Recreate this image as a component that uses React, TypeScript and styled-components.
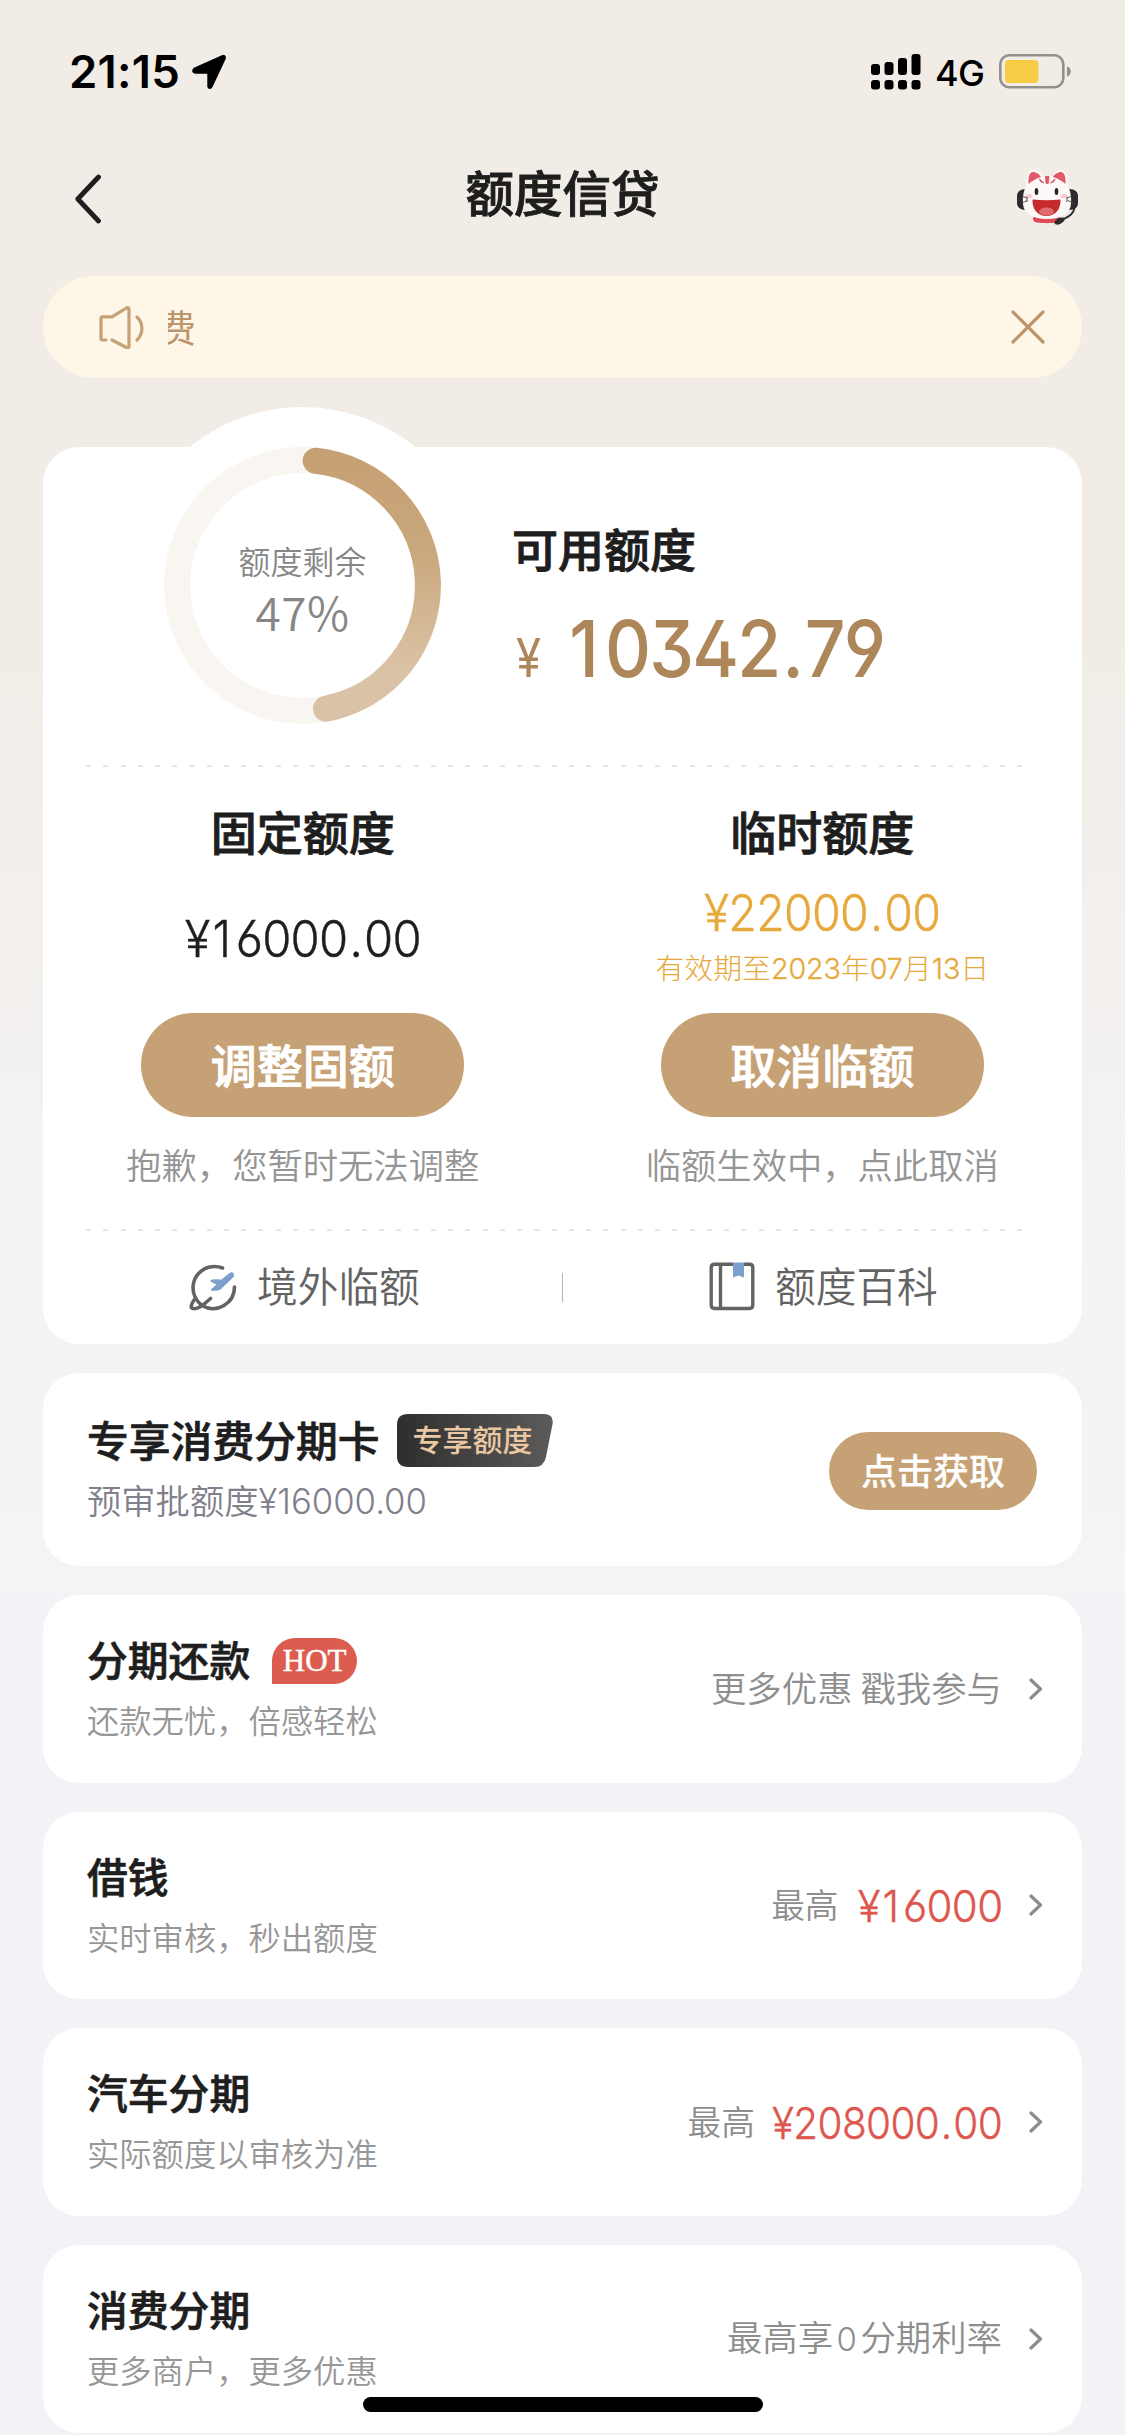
import React from "react";
import styled, { createGlobalStyle } from "styled-components";

const CJK = `"Noto Sans CJK SC", sans-serif`;
const LATIN = `Inter, "Noto Sans CJK SC", sans-serif`;
const GOLD = "#c6a175";
const INK = "#1e1e1e";

const GlobalStyle = createGlobalStyle`
  * { box-sizing: border-box; }
  html, body { margin: 0; padding: 0; }
  body { background: #f2f3f6; font-family: ${CJK}; color: ${INK}; }
  button { border: 0; padding: 0; background: none; font: inherit; color: inherit; }
  svg { display: block; flex: none; }
`;

const Page = styled.div`
  width: 1125px;
  height: 2435px;
  overflow: hidden;
  background: linear-gradient(180deg, #f1ece6 0, #f1ece6 640px, #f4f3f3 1180px, #f4f4f4 1595px, #f2f3f6 1595px);
`;

const StatusBar = styled.div`
  height: 132px;
  display: flex;
  align-items: flex-start;
  justify-content: space-between;
  padding: 54px 53px 0 69px;
  color: #000;
`;

const StatusGroup = styled.div`
  display: flex;
  align-items: center;
  height: 35px;
`;

const Clock = styled.span`
  font: 600 45.5px/35px ${LATIN};
  width: 122px;
  letter-spacing: 0.2px;
`;

const Network = styled.span`
  font: 500 36px/35px ${LATIN};
  width: 50px;
  margin: 3px 14px 0 14px;
  letter-spacing: -0.6px;
`;

const NavBar = styled.header`
  height: 144px;
  display: grid;
  grid-template-columns: 186px 1fr 214px;
  padding: 32px 47px 0 75px;
  align-items: start;
`;

const NavTitle = styled.h1`
  margin: 0;
  text-align: center;
  font-size: 48.5px;
  line-height: 54px;
  font-weight: 500;
  -webkit-text-stroke: 0.9px currentColor;
`;

const IconButton = styled.button<{ $end?: boolean }>`
  display: flex;
  justify-content: ${(p) => (p.$end ? "flex-end" : "flex-start")};
  padding-top: ${(p) => (p.$end ? 6 : 10)}px;
`;

const Notice = styled.div`
  height: 102px;
  margin: 0 43px;
  padding: 0 37px 0 55px;
  border-radius: 51px;
  background: #fef7e8;
  display: flex;
  align-items: center;
`;

const NoticeText = styled.div`
  flex: 1;
  margin: -3px 0 0 24px;
  overflow: hidden;
  color: #be956a;
  font-size: 38px;
  line-height: 56px;
  text-indent: -10px;
  white-space: nowrap;
`;

const Content = styled.main`
  padding: 69px 43px 0;
  display: flex;
  flex-direction: column;
  gap: 28.8px;
`;

const HeroCard = styled.section`
  position: relative;
  height: 897px;
  flex: none;
  border-radius: 36px;
  background: #fff;
  &::before {
    content: "";
    position: absolute;
    left: 81px;
    top: -40px;
    width: 357px;
    height: 357px;
    border-radius: 50%;
    background: #fff;
  }
`;

const Summary = styled.div`
  position: relative;
  display: flex;
  height: 318px;
  padding-left: 121px;
`;

const Gauge = styled.div`
  width: 277px;
  height: 277px;
  display: grid;
  place-items: center;
  & > * { grid-area: 1 / 1; }
`;

const GaugeText = styled.div`
  display: flex;
  flex-direction: column;
  align-items: center;
  color: #868686;
  padding-top: 6px;
`;

const GaugeLabel = styled.span`
  font-size: 32px;
  line-height: 44px;
  font-weight: 350;
`;

const GaugeValue = styled.span`
  font-size: 46px;
  line-height: 58px;
  font-weight: 350;
  letter-spacing: 0.4px;
`;

const Balance = styled.div`
  padding: 71px 0 0 71px;
`;

const BlockTitle = styled.h2`
  margin: 0;
  font-size: 46px;
  line-height: 58px;
  font-weight: 500;
  -webkit-text-stroke: 0.9px currentColor;
`;

const BalanceAmount = styled.div`
  display: flex;
  align-items: baseline;
  margin-top: 29px;
  height: 88px;
  color: #ad8659;
  font-family: ${LATIN};
  font-weight: 500;
  line-height: 88px;
`;

const BalanceYen = styled.span`
  font-size: 53px;
  font-weight: 400;
  width: 49px;
  margin-left: 4px;
  transform: scaleX(0.86);
  transform-origin: 0 50%;
`;

const BalanceDigits = styled.span`
  font-size: 78.4px;
  letter-spacing: -2px;
  font-feature-settings: "cv03", "cv04", "ss01";
  transform: scaleX(0.91);
  transform-origin: 0 50%;
`;

const One = styled.span`
  padding: 0 0.11em 0 0.06em;
`;

const Point = styled.span`
  padding: 0 0.04em;
`;

const Dashes = styled.div`
  height: 2px;
  margin: 0 55px 0 43px;
  background: repeating-linear-gradient(90deg, #e6e6e6 0 5px, transparent 5px 17.25px);
`;

const Limits = styled.div`
  height: 462px;
  display: grid;
  grid-template-columns: 1fr 1fr;
`;

const LimitColumn = styled.div`
  display: flex;
  flex-direction: column;
  align-items: center;
  padding-top: 34px;
`;

const LimitValue = styled.div`
  height: 154px;
  padding-top: 5px;
  display: flex;
  flex-direction: column;
  align-items: center;
  justify-content: center;
`;

const Money = styled.span<{ $size: number; $color: string; $origin?: string; $squeeze?: number }>`
  display: inline-block;
  font-family: ${LATIN};
  font-weight: 300;
  font-size: ${(p) => p.$size}px;
  line-height: 52px;
  color: ${(p) => p.$color};
  font-feature-settings: "cv03", "cv04", "ss01";
  letter-spacing: -0.015em;
  transform: scaleX(${(p) => p.$squeeze ?? 0.945});
  transform-origin: ${(p) => p.$origin ?? "50%"} 50%;
  -webkit-text-stroke: 0.4px currentColor;
`;

const Expiry = styled.span`
  margin-top: 6px;
  font: 300 28.9px/42px "Noto Sans CJK SC", sans-serif;
  color: #e6a93c;
  b {
    font: 300 28.7px/42px ${LATIN};
    letter-spacing: -0.1px;
    -webkit-text-stroke: 0.3px currentColor;
  }
`;

const PillButton = styled.button<{ $small?: boolean }>`
  width: ${(p) => (p.$small ? 208 : 323)}px;
  height: ${(p) => (p.$small ? 78 : 104)}px;
  margin-right: ${(p) => (p.$small ? 6 : 0)}px;
  margin-top: ${(p) => (p.$small ? 4 : 0)}px;
  border-radius: 52px;
  background: ${GOLD};
  color: #fff;
  font-size: ${(p) => (p.$small ? 36 : 46)}px;
  line-height: ${(p) => (p.$small ? 72 : 98)}px;
  padding-bottom: 5px;
  font-weight: 500;
  -webkit-text-stroke: ${(p) => (p.$small ? 0.2 : 0.9)}px currentColor;
`;

const Hint = styled.span`
  margin-top: 21px;
  font-size: 35.3px;
  line-height: 52px;
  font-weight: 350;
  color: #959595;
`;

const HeroLinks = styled.div`
  height: 113px;
  display: grid;
  grid-template-columns: 1fr 1px 1fr;
  align-items: center;
`;

const LinkDivider = styled.i`
  width: 1px;
  height: 29px;
  background: #b4b4b4;
`;

const HeroLink = styled.a`
  display: flex;
  align-items: center;
  padding-left: 146px;
  gap: 20px;
  color: #636363;
  font-size: 40.7px;
  line-height: 56px;
  font-weight: 350;
  svg { margin-top: -2px; }
  span { margin-top: -5px; }
`;

const OfferCard = styled.section<{ $height: number }>`
  height: ${(p) => p.$height}px;
  flex: none;
  border-radius: 36px;
  background: #fff;
  padding: 0 39px 0 44px;
  display: flex;
  justify-content: space-between;
`;

const OfferInfo = styled.div<{ $top: number }>`
  padding-top: ${(p) => p.$top}px;
`;

const OfferHead = styled.div`
  display: flex;
  align-items: center;
  height: 56px;
`;

const OfferTitle = styled.h3<{ $size?: number }>`
  margin: 0;
  font-size: ${(p) => p.$size ?? 40.8}px;
  line-height: 56px;
  font-weight: 500;
  -webkit-text-stroke: 0.7px currentColor;
`;

const OfferSub = styled.p<{ $size?: number; $color?: string }>`
  margin: 8px 0 0;
  font-size: ${(p) => p.$size ?? 32.3}px;
  line-height: 48px;
  font-weight: 350;
  color: ${(p) => p.$color ?? "#979797"};
  b { font: 300 34.7px/48px ${LATIN}; }
`;

const ExclusiveTag = styled.span`
  margin: 3px 0 0 17px;
  width: 156px;
  height: 53px;
  display: grid;
  & > * { grid-area: 1 / 1; }
  span {
    z-index: 1;
    padding-left: 16px;
    font-size: 30px;
    line-height: 48px;
    font-weight: 500;
    color: #e9c8a2;
  }
`;

const HotTag = styled.span`
  margin: 5px 0 0 22px;
  width: 85px;
  height: 46px;
  border-radius: 23px 23px 23px 0;
  background: #dc5d50;
  color: #fff;
  font: 400 31px/46px "Liberation Serif", serif;
  text-align: center;
  -webkit-text-stroke: 0.5px currentColor;
`;

const OfferSide = styled.div`
  display: flex;
  align-items: center;
  color: #8e8e8e;
  font-size: 35.4px;
  font-weight: 350;
  line-height: 50px;
  white-space: pre;
  svg { margin-left: 26px; }
  & > span { margin-top: -3px; }
  & > ${Money} { margin-top: 2px; }
`;

const Zero = styled.span`
  font: 300 33px/50px ${LATIN};
  margin: 0 3.5px;
`;

const Most = styled.span<{ $tuck: number }>`
  font-size: 33.7px;
  margin-right: ${(p) => p.$tuck}px;
`;

const HomeBar = styled.div`
  position: absolute;
  left: 363px;
  top: 2397px;
  width: 400px;
  height: 15px;
  border-radius: 8px;
  background: #000;
`;

const LocationArrow = () => (
  <svg width="36" height="36" viewBox="0 0 36 36">
    <path d="M31.500 2.600 3.500 15.200Q1.500 17.300 4 18.200H17.800V32.500Q19 34.800 20.300 32.200L33.400 4Q33.600 1.700 31.500 2.600Z" fill="#000" stroke="#000" strokeWidth="3" strokeLinejoin="round" />
  </svg>
);

const Signal = () => (
  <svg width="50" height="36" viewBox="0 0 50 36">
    {[10, 8, 4, 0].map((top, i) => (
      <g key={i}>
        <rect x={i * 13.5} y={top} width="9" height={21 - top} rx="3" />
        <rect x={i * 13.5} y="26" width="9" height="9.500" rx="3" />
      </g>
    ))}
  </svg>
);

const Battery = () => (
  <svg width="73" height="35" viewBox="0 0 73 35">
    <rect x="1.300" y="1.300" width="63" height="32" rx="9" fill="none" stroke="#93908c" strokeWidth="2.600" />
    <rect x="6" y="6" width="33.500" height="23" rx="4" fill="#f6cd45" />
    <path d="M68 12.500c5 1.500 5 8.500 0 10Z" fill="#93908c" />
  </svg>
);

const BackIcon = () => (
  <svg width="27" height="50" viewBox="0 0 27 50">
    <path d="M23.500 3 2.800 25 23.500 47" fill="none" stroke={INK} strokeWidth="4.800" strokeLinecap="round" strokeLinejoin="round" />
  </svg>
);

const CatIcon = () => (
  <svg width="61" height="55" viewBox="0 0 61 55">
    <path d="M9 19C3 19 0 22 0 26v7c0 4 3 7 9 7ZM52 19c6 0 9 3 9 7v7c0 4-3 7-9 7Z" fill="#2d2b2d" />
    <path d="M17 47h25c2 0 2 4 0 5-4 1.500-20 1.500-24 0-2-1-3-5-1-5Z" fill="#e04a57" />
    <path d="M9.500 16C9 8 11 0 16 0c5 0 8 3 10 6h10c2-3 4-6 8-6 5 0 7 8 6.500 16 3.500 5 4 12 3.500 18C53.500 43 44 49 30 49S6.500 43 6 34c-.3-6 0-13 3.500-18Z" fill="#fdf9f8" />
    <path d="M11.500 14C11 6 13 2 16 2 19.500 2 22.500 4.500 24 7 19 8.500 15 11 11.500 14ZM48.500 14C49 6 47 2 44 2 40.500 2 37.500 4.500 36 7 41 8.500 45 11 48.500 14Z" fill="#e0586a" />
    <path d="M28.500 6.500h3.500l-.8 7h-2ZM22.500 9l4.500 4-3.500-1.500ZM38 9l-4.500 4 3.500-1.500Z" fill="#e0586a" stroke="#e0586a" strokeWidth="1" strokeLinejoin="round" />
    <ellipse cx="19.500" cy="21.500" rx="1.800" ry="3.600" fill="#282425" />
    <ellipse cx="39.500" cy="21.500" rx="1.800" ry="3.600" fill="#282425" />
    <ellipse cx="12" cy="26" rx="3.500" ry="2" fill="#f9c9cd" />
    <ellipse cx="47" cy="26" rx="3.500" ry="2" fill="#f9c9cd" />
    <path d="M15.500 29.500q14 1.500 28 0c.5 9.500-5 16.500-14 16.500s-14.500-7-14-16.500Z" fill="#c62a2c" />
    <ellipse cx="29.500" cy="41.500" rx="7.500" ry="4" fill="#e16a70" />
    <path d="m5 26 5 2M5 33l5-2.500M10 27v5M55 26l-5 2M56 33l-5-2.500M50 27v5" stroke="#555" strokeWidth="1" fill="none" />
    <path d="M57.500 38c-1 6-6 9-11 11" stroke="#2d2b2d" strokeWidth="1.800" fill="none" />
    <path d="M38 51c2-2 5-4 8-3.500 3 .5 2 3 0 4.500-2 2-5 3-7 2.500-1.500-.5-2-2-1-3.500Z" fill="#2d2b2d" />
  </svg>
);

const SpeakerIcon = () => (
  <svg width="46" height="44" viewBox="0 0 46 44" fill="none" stroke={GOLD} strokeWidth="3.200" strokeLinecap="round" strokeLinejoin="round">
    <path d="M8 35H4.500Q3 35 3 33.500V13.500Q3 11.800 4.500 11.800H14L28.500 3Q31 2 31 4.500V41Q31 43.500 28.500 42.500L14 35" />
    <path d="M39 12C45.500 18.500 45.500 28.500 39 35" />
  </svg>
);

const CloseIcon = () => (
  <svg width="34" height="34" viewBox="0 0 34 34">
    <path d="M2 2 32 32M32 2 2 32" stroke="#be956a" strokeWidth="3.200" strokeLinecap="round" />
  </svg>
);

const GAUGE_RADIUS = 125.4;
const point = (deg: number) => {
  const a = (deg * Math.PI) / 180;
  return `${138.5 + GAUGE_RADIUS * Math.sin(a)} ${138.5 - GAUGE_RADIUS * Math.cos(a)}`;
};

const GaugeRing = () => (
  <svg width="277" height="277" viewBox="0 0 277 277" fill="none" strokeWidth="26">
    <defs>
      <linearGradient id="ring" x1="0" y1="0" x2="0" y2="277" gradientUnits="userSpaceOnUse">
        <stop offset="0" stopColor="#c5a073" />
        <stop offset="0.350" stopColor="#c9a67b" />
        <stop offset="0.800" stopColor="#dac2a5" />
        <stop offset="1" stopColor="#dac2a8" />
      </linearGradient>
    </defs>
    <circle cx="138.500" cy="138.500" r={GAUGE_RADIUS} stroke="#f9f6f2" />
    <path d={`M${point(6)} A${GAUGE_RADIUS} ${GAUGE_RADIUS} 0 0 1 ${point(169.2)}`} stroke="url(#ring)" strokeLinecap="round" />
  </svg>
);

const TravelIcon = () => (
  <svg width="48" height="48" viewBox="0 0 48 48" fill="none" stroke="#636363" strokeWidth="3.600" strokeLinecap="round" strokeLinejoin="round">
    <path d="M33.500 5A21.500 21.500 0 0 0 6.500 35Q2 41 2.200 44.500Q5 48 14 42L21.500 35.500" />
    <path d="M6.500 35Q9 39.500 13 42.500A21.500 21.500 0 0 0 45.500 24" />
    <path d="M44 10.500c1.800 1.500 0 4-2 5.500l-8 7.500c-2 3-5 4.500-12 3.500l6-5.500-6.500-3.500c2-2 7-.8 11-1l8-6.500c1.500-1 2.500-1 3.500 0Z" fill="#7d9fcd" stroke="#7d9fcd" strokeWidth="1" />
  </svg>
);

const BookIcon = () => (
  <svg width="46" height="49" viewBox="0 0 46 49">
    <path d="M24 .5h11v15l-5.500-2-5.500 2Z" fill="#7d9fcd" />
    <path d="M24 2.200H5.500Q2.200 2.200 2.200 5.500V43Q2.200 46.500 5.500 46.500H40.500Q43.800 46.500 43.800 43V5.500Q43.800 2.200 40.500 2.200H35M11.500 2V46.500" fill="none" stroke="#636363" strokeWidth="3.400" />
  </svg>
);

const ChevronIcon = () => (
  <svg width="15" height="22" viewBox="0 0 15 22">
    <path d="M3 2 12.500 11 3 20" fill="none" stroke="#8c8c8c" strokeWidth="3.200" strokeLinecap="round" strokeLinejoin="round" />
  </svg>
);

const TagShape = () => (
  <svg width="156" height="53" viewBox="0 0 156 53">
    <defs>
      <linearGradient id="tag" x1="0" y1="0" x2="1" y2="0">
        <stop offset="0" stopColor="#2e2e2e" />
        <stop offset="1" stopColor="#5c5b5a" />
      </linearGradient>
    </defs>
    <path d="M11 0H147Q157 0 155.500 10L149 43Q147 53 137 53H11Q0 53 0 42V11Q0 0 11 0Z" fill="url(#tag)" />
  </svg>
);

/* Gives the narrow "1" and the decimal point some breathing room. */
const Digits = ({ value }: { value: string }) => (
  <>
    {value.split(/([1.])/).map((part, i) =>
      part === "1" ? <One key={i}>1</One> : part === "." ? <Point key={i}>.</Point> : part
    )}
  </>
);

type Offer = {
  title: string;
  sub: string;
  hot?: boolean;
  side?: React.ReactNode;
  amount?: string;
  tuck?: number;
  squeeze?: number;
};

const offers: Offer[] = [
  { title: "分期还款", sub: "还款无忧，倍感轻松", hot: true, side: "更多优惠 戳我参与" },
  { title: "借钱", sub: "实时审核，秒出额度", amount: "¥16000", tuck: 12, squeeze: 0.955 },
  { title: "汽车分期", sub: "实际额度以审核为准", amount: "¥208000.00", tuck: -3, squeeze: 0.92 },
  { title: "消费分期", sub: "更多商户，更多优惠", side: <>最高享<Zero>0</Zero>分期利率</> },
];

export default function App() {
  return (
    <Page>
      <GlobalStyle />
      <StatusBar>
        <StatusGroup>
          <Clock>21:15</Clock>
          <LocationArrow />
        </StatusGroup>
        <StatusGroup>
          <Signal />
          <Network>4G</Network>
          <Battery />
        </StatusGroup>
      </StatusBar>
      <NavBar>
        <IconButton aria-label="返回"><BackIcon /></IconButton>
        <NavTitle>额度信贷</NavTitle>
        <IconButton $end aria-label="客服"><CatIcon /></IconButton>
      </NavBar>
      <Notice>
        <SpeakerIcon />
        <NoticeText>费</NoticeText>
        <CloseIcon />
      </Notice>
      <Content>
        <HeroCard>
          <Summary>
            <Gauge>
              <GaugeRing />
              <GaugeText>
                <GaugeLabel>额度剩余</GaugeLabel>
                <GaugeValue>47%</GaugeValue>
              </GaugeText>
            </Gauge>
            <Balance>
              <BlockTitle>可用额度</BlockTitle>
              <BalanceAmount>
                <BalanceYen>¥</BalanceYen>
                <BalanceDigits><Digits value="10342.79" /></BalanceDigits>
              </BalanceAmount>
            </Balance>
          </Summary>
          <Dashes />
          <Limits>
            <LimitColumn>
              <BlockTitle>固定额度</BlockTitle>
              <LimitValue>
                <Money $size={50} $color={INK}><Digits value="¥16000.00" /></Money>
              </LimitValue>
              <PillButton>调整固额</PillButton>
              <Hint>抱歉，您暂时无法调整</Hint>
            </LimitColumn>
            <LimitColumn>
              <BlockTitle>临时额度</BlockTitle>
              <LimitValue>
                <Money $size={50} $color="#e6a93c" $squeeze={0.93}><Digits value="¥22000.00" /></Money>
                <Expiry>有效期至<b>2023</b>年<b>07</b>月<b>13</b>日</Expiry>
              </LimitValue>
              <PillButton>取消临额</PillButton>
              <Hint>临额生效中，点此取消</Hint>
            </LimitColumn>
          </Limits>
          <Dashes />
          <HeroLinks>
            <HeroLink><TravelIcon /><span>境外临额</span></HeroLink>
            <LinkDivider />
            <HeroLink><BookIcon /><span>额度百科</span></HeroLink>
          </HeroLinks>
        </HeroCard>

        <OfferCard $height={193.4}>
          <OfferInfo $top={38}>
            <OfferHead>
              <OfferTitle $size={41.8}>专享消费分期卡</OfferTitle>
              <ExclusiveTag><TagShape /><span>专享额度</span></ExclusiveTag>
            </OfferHead>
            <OfferSub $size={34.3} $color="#80808c">预审批额度<b>¥16000.00</b></OfferSub>
          </OfferInfo>
          <OfferSide><PillButton $small>点击获取</PillButton></OfferSide>
        </OfferCard>

        {offers.map((o) => (
          <OfferCard key={o.title} $height={187.8}>
            <OfferInfo $top={36}>
              <OfferHead>
                <OfferTitle>{o.title}</OfferTitle>
                {o.hot && <HotTag>HOT</HotTag>}
              </OfferHead>
              <OfferSub>{o.sub}</OfferSub>
            </OfferInfo>
            <OfferSide>
              {o.side && <span>{o.side}</span>}
              {o.amount && <Most $tuck={o.tuck ?? 0}>最高</Most>}
              {o.amount && (
                <Money $size={44} $color="#dd574f" $origin="100%" $squeeze={o.squeeze}>
                  <Digits value={o.amount} />
                </Money>
              )}
              <ChevronIcon />
            </OfferSide>
          </OfferCard>
        ))}
      </Content>
      <HomeBar />
    </Page>
  );
}
